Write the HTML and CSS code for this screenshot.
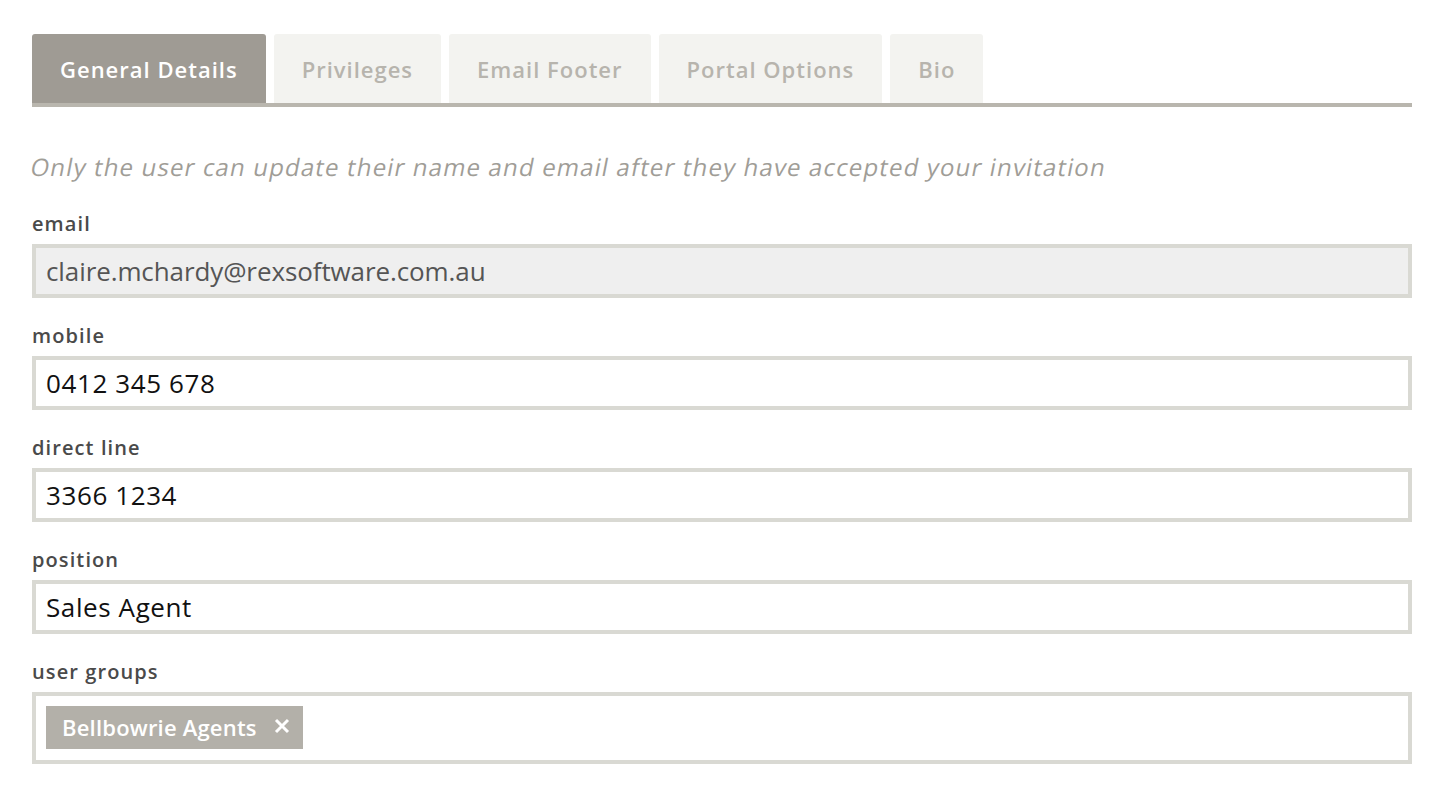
FILE: index.html
```html
<!DOCTYPE html>
<html lang="en">
<head>
	<meta charset="UTF-8">
	<title>User Details</title>
	<link rel="stylesheet" href="styles.css">
</head>
<body>
	<div class="page">
		<ul class="tabs">
			<li class="active">General Details</li>
			<li>Privileges</li>
			<li>Email Footer</li>
			<li>Portal Options</li>
			<li>Bio</li>
		</ul>
		<p class="note"><span>Only the user can update their name and email after they have accepted your invitation</span></p>
		<div class="field">
			<label>email</label>
			<div class="input disabled">claire.mchardy@rexsoftware.com.au</div>
		</div>
		<div class="field">
			<label>mobile</label>
			<div class="input">0412 345 678</div>
		</div>
		<div class="field">
			<label>direct line</label>
			<div class="input">3366 1234</div>
		</div>
		<div class="field">
			<label>position</label>
			<div class="input">Sales Agent</div>
		</div>
		<div class="field">
			<label>user groups</label>
			<div class="input tags">
				<span class="tag">Bellbowrie Agents
					<svg class="close" width="16" height="16" viewBox="0 0 16 16"><path d="M2 2L14 14M14 2L2 14" stroke="#fff" stroke-width="3"/></svg>
				</span>
			</div>
		</div>
	</div>
</body>
</html>
```

FILE: styles.css
```css
*{
	margin: 0;
	padding: 0;
	box-sizing: border-box;
}
ul,li{
	list-style: none;
}
body{
	font-family: "Open Sans", "Lato", sans-serif;
	background: #fff;
	color: #444;
}
.page{
	padding: 34px 36px 0 32px;
}
.tabs{
	display: flex;
	gap: 8px;
	border-bottom: 4px solid #b9b6ae;
}
.tabs>li{
	height: 69px;
	line-height: 70px;
	padding: 0 28px;
	font-size: 22px;
	font-weight: 600;
	letter-spacing: 1px;
	color: #b7b4ad;
	background: #f3f3f0;
	border-radius: 3px 3px 0 0;
}
.tabs>li.active{
	background: #9f9b94;
	color: #fff;
}
.note{
	margin-top: 45px;
	font-size: 24px;
	line-height: 30px;
	color: #a09d97;
}
.note span{
	display: inline-block;
	letter-spacing: 1.15px;
	transform: skewX(-11deg);
	transform-origin: left center;
	margin-left: -1px;
}
.field{
	margin-top: 30px;
}
.field+.field{
	margin-top: 26px;
}
.field label{
	display: block;
	font-size: 20px;
	line-height: 24px;
	font-weight: 600;
	letter-spacing: 1.1px;
	color: #4a4a4a;
	margin-bottom: 8px;
}
.input{
	height: 54px;
	border: 4px solid #d9d9d3;
	padding: 0 10px;
	font-size: 26px;
	line-height: 46px;
	letter-spacing: 0.6px;
	color: #111;
	background: #fff;
}
.input.disabled{
	background: #efefef;
	color: #555;
	letter-spacing: -0.1px;
}
.input.tags{
	height: 72px;
	padding: 10px;
	line-height: 43px;
}
.tag{
	display: inline-flex;
	align-items: center;
	height: 43px;
	padding: 0 13px 0 16px;
	background: #b3b0a9;
	color: #fff;
	font-size: 22px;
	font-weight: 600;
	letter-spacing: 0.2px;
	vertical-align: top;
}
.close{
	margin-left: 17px;
	margin-top: -3px;
}
```
